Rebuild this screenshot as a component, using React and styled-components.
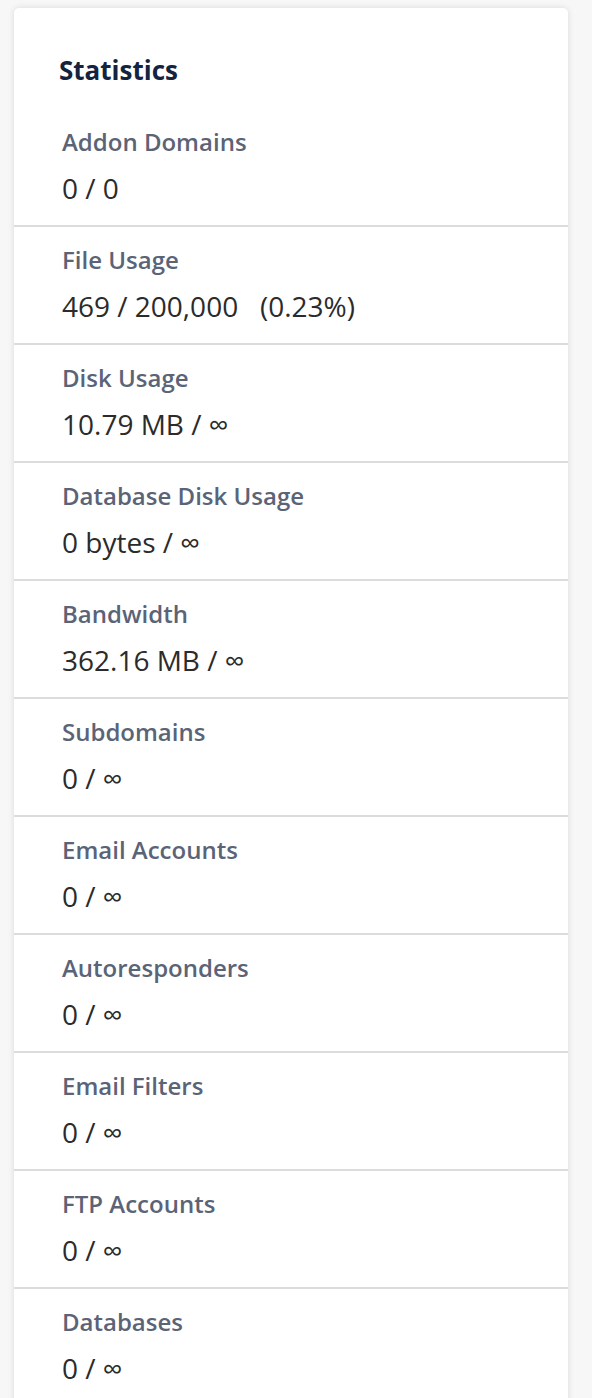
import React from "react";
import styled, { createGlobalStyle } from "styled-components";

const Global = createGlobalStyle`
  html, body { margin: 0; padding: 0; background: #f7f7f7; }
  body { font-family: "Open Sans", "Noto Sans", sans-serif; }
`;

const Page = styled.div`
  padding: 8px 24px 0 14px;
`;

const Card = styled.section`
  background: #fff;
  border-radius: 5px 5px 0 0;
  box-shadow: 0 0 6px rgba(0, 0, 0, 0.12);
  width: 554px;
`;

const Title = styled.h2`
  margin: 0;
  padding: 44px 0 21px 45px;
  font-size: 26px;
  line-height: 36px;
  font-weight: 700;
  color: #14233f;
`;

const Row = styled.div`
  padding: 15px 0 16px 48px;
  border-top: ${(p) => (p.$first ? "none" : "2px solid #dcdcdc")};
`;

const Label = styled.div`
  font-size: 24px;
  line-height: 36px;
  font-weight: 600;
  color: #5b6477;
`;

const Value = styled.div`
  margin-top: 7px;
  font-size: 28px;
  line-height: 42px;
  color: #2b2b2b;
  white-space: pre;
`;

const stats = [
  ["Addon Domains", "0 / 0"],
  ["File Usage", "469 / 200,000   (0.23%)"],
  ["Disk Usage", "10.79 MB / ∞"],
  ["Database Disk Usage", "0 bytes / ∞"],
  ["Bandwidth", "362.16 MB / ∞"],
  ["Subdomains", "0 / ∞"],
  ["Email Accounts", "0 / ∞"],
  ["Autoresponders", "0 / ∞"],
  ["Email Filters", "0 / ∞"],
  ["FTP Accounts", "0 / ∞"],
  ["Databases", "0 / ∞"],
];

export default function App() {
  return (
    <>
      <Global />
      <Page>
        <Card>
          <Title>Statistics</Title>
          {stats.map(([label, value], i) => (
            <Row key={label} $first={i === 0}>
              <Label>{label}</Label>
              <Value>{value}</Value>
            </Row>
          ))}
        </Card>
      </Page>
    </>
  );
}
